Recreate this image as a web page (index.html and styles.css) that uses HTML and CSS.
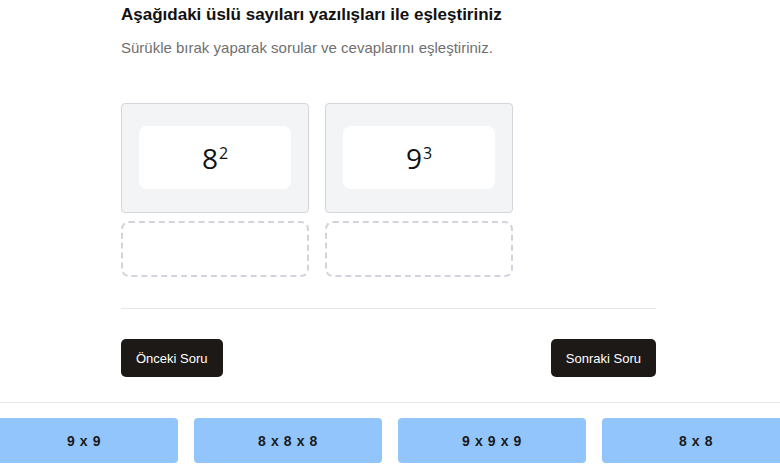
FILE: index.html
```html
<!DOCTYPE html>
<html lang="tr">
  <head>
    <meta charset="UTF-8" />
    <title>Eşleştirme</title>
    <link rel="stylesheet" href="styles.css">
  </head>
  <body>
    <div class="quiz">
      <h2>Aşağıdaki üslü sayıları yazılışları ile eşleştiriniz</h2>
      <p class="hint">Sürükle bırak yaparak sorular ve cevaplarını eşleştiriniz.</p>

      <div class="pairs">
        <div class="pair">
          <div class="question">
            <div class="power">8<sup>2</sup></div>
          </div>
          <div class="drop"></div>
        </div>
        <div class="pair">
          <div class="question">
            <div class="power">9<sup>3</sup></div>
          </div>
          <div class="drop"></div>
        </div>
      </div>

      <div class="nav">
        <button class="nav-btn">Önceki Soru</button>
        <button class="nav-btn">Sonraki Soru</button>
      </div>
    </div>

    <div class="answers">
      <div class="answer">9 x 9</div>
      <div class="answer">8 x 8 x 8</div>
      <div class="answer">9 x 9 x 9</div>
      <div class="answer">8 x 8</div>
    </div>
  </body>
</html>
```

FILE: styles.css
```css
body {
  margin: 0;
  font-family: "Liberation Sans", Arial, sans-serif;
  background: #ffffff;
  color: #111111;
  overflow: hidden;
}

.quiz {
  width: 535px;
  margin: 0 0 0 121px;
  padding-top: 5px;
}

h2 {
  margin: 0;
  font-size: 17px;
  line-height: 20px;
  font-weight: bold;
  color: #111111;
}

.hint {
  margin: 14px 0 0;
  font-size: 15px;
  line-height: 18px;
  color: #707070;
}

.pairs {
  display: flex;
  gap: 16px;
  margin-top: 46px;
}

.pair {
  width: 188px;
  display: flex;
  flex-direction: column;
  gap: 8px;
}

.question {
  background: #f3f4f6;
  border: 1px solid #d4d6db;
  border-radius: 4px;
  padding: 22px 17px 23px;
}

.power {
  height: 63px;
  background: #ffffff;
  border-radius: 8px;
  display: flex;
  align-items: center;
  justify-content: center;
  font-family: "Open Sans", "Noto Sans", sans-serif;
  font-size: 28px;
  color: #111111;
}

.power sup {
  font-size: 16px;
  line-height: 0;
  position: relative;
  top: -5px;
  margin-left: 1px;
}

.drop {
  height: 52px;
  border: 2px dashed #d1d5db;
  border-radius: 8px;
}

.nav {
  display: flex;
  justify-content: space-between;
  margin-top: 31px;
  padding-top: 30px;
  border-top: 1px solid #e5e7eb;
}

.nav-btn {
  height: 38px;
  padding: 0 15px;
  background: #1c1917;
  color: #ffffff;
  border: none;
  border-radius: 5px;
  font-family: "Liberation Sans", Arial, sans-serif;
  font-size: 13px;
  cursor: pointer;
}

.answers {
  display: flex;
  justify-content: center;
  gap: 16px;
  margin-top: 25px;
  padding-top: 15px;
  border-top: 1px solid #e5e7eb;
}

.answer {
  flex: 0 0 188px;
  height: 45px;
  background: #93c5fd;
  border-radius: 4px;
  display: flex;
  align-items: center;
  justify-content: center;
  font-size: 14px;
  font-weight: bold;
  letter-spacing: 0.6px;
  color: #1a1a1a;
}
```
